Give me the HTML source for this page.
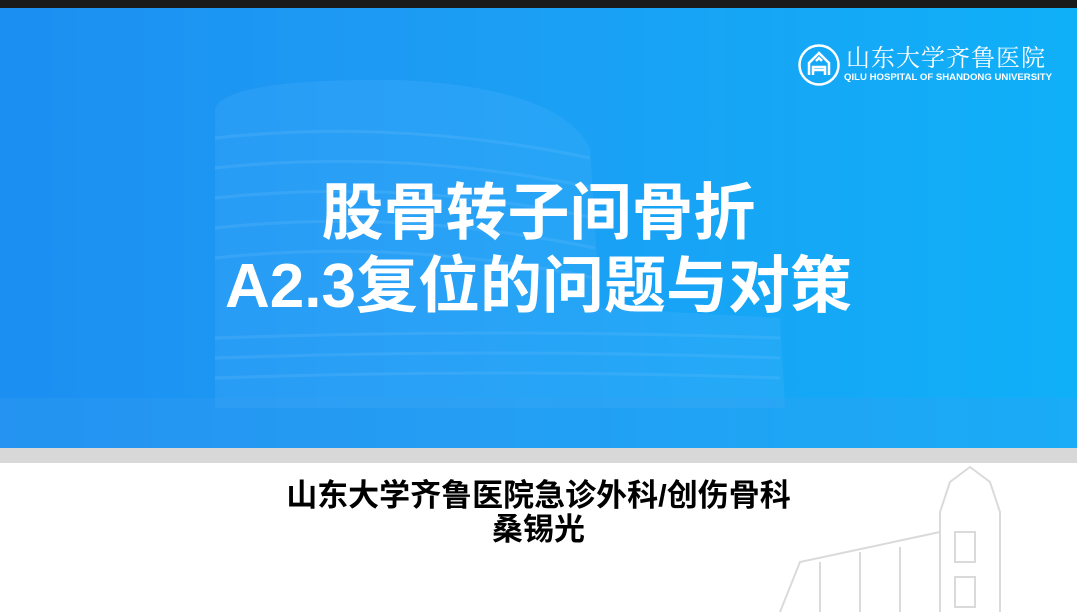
<!DOCTYPE html>
<html><head><meta charset="utf-8"><style>
html,body{margin:0;padding:0;width:1077px;height:612px;overflow:hidden;background:#fff;}
body{position:relative;font-family:"Liberation Sans","Noto Sans CJK SC",sans-serif;}
.top{position:absolute;left:0;top:0;width:1077px;height:8px;background:#1a1a1a;}
.blue{position:absolute;left:0;top:8px;width:1077px;height:440px;background:linear-gradient(90deg,#1c8ff2 0%,#1d9cf4 40%,#0fb0f8 100%);overflow:hidden;}
.gray{position:absolute;left:0;top:448px;width:1077px;height:15px;background:#d8d8d8;}
.title{position:absolute;left:0;width:1077px;text-align:center;color:#fff;font-weight:bold;font-size:62px;line-height:62px;font-family:"Liberation Sans","Noto Sans CJK SC",sans-serif;}
.sub{position:absolute;left:0;width:1077px;text-align:center;color:#000;font-weight:bold;font-size:31px;line-height:33px;}
</style></head><body>
<div class="top"></div>
<div class="blue">
<svg width="1077" height="440" style="position:absolute;left:0;top:0">
<g fill="#5bb8ff" opacity="0.2">
<path d="M215 100 Q230 70 400 72 Q560 80 590 140 L600 300 L780 310 L785 400 L215 400 Z"/>
</g>
<g stroke="#7cc8ff" stroke-width="3" opacity="0.18" fill="none">
<path d="M215 130 Q400 110 590 150"/><path d="M215 160 Q400 140 595 180"/>
<path d="M215 190 Q400 170 595 210"/><path d="M215 220 Q400 200 595 240"/>
<path d="M215 250 Q400 230 595 270"/><path d="M215 330 Q500 320 780 330"/>
<path d="M215 350 Q500 340 780 350"/><path d="M215 370 Q500 360 780 370"/>
</g>
<rect x="0" y="390" width="1077" height="50" fill="#3aa0f0" opacity="0.25"/>
</svg>
</div>
<div class="gray"></div>
<svg width="360" height="160" style="position:absolute;left:720px;top:452px" opacity="0.3">
<g stroke="#888" fill="none" stroke-width="2">
<path d="M220 160 L220 60 L230 30 L250 15 L270 30 L280 60 L280 160"/>
<path d="M60 160 L80 110 L220 80"/><path d="M100 160 L100 110"/><path d="M140 160 L140 100"/><path d="M180 160 L180 95"/>
<path d="M235 80 h20 v30 h-20z"/><path d="M235 125 h20 v30 h-20z"/>
</g></svg>
<svg width="44" height="44" style="position:absolute;left:797px;top:43px" viewBox="0 0 44 44">
<circle cx="22" cy="22" r="19.5" fill="none" stroke="#fff" stroke-width="2.5"/>
<path d="M12 32 V20 L22 10 L32 20 V32 M16 32 V24 H28 V32 M16 27 H28 M19 18 L22 15 L25 18" fill="none" stroke="#fff" stroke-width="2.5"/>
</svg>
<div style="position:absolute;left:846px;top:42px;color:#fff;font-size:24px;line-height:28px;font-family:'Noto Serif CJK SC','Noto Sans CJK SC',serif;letter-spacing:1px;">山东大学齐鲁医院</div>
<div style="position:absolute;left:844px;top:73px;color:#fff;font-size:9.6px;font-weight:bold;line-height:10px;white-space:nowrap;">QILU HOSPITAL OF SHANDONG UNIVERSITY</div>
<div class="title" style="top:183px;">股骨转子间骨折</div>
<div class="title" style="top:256px;">A2.3复位的问题与对策</div>
<div class="sub" style="top:479px;">山东大学齐鲁医院急诊外科/创伤骨科</div>
<div class="sub" style="top:513px;">桑锡光</div>
</body></html>
